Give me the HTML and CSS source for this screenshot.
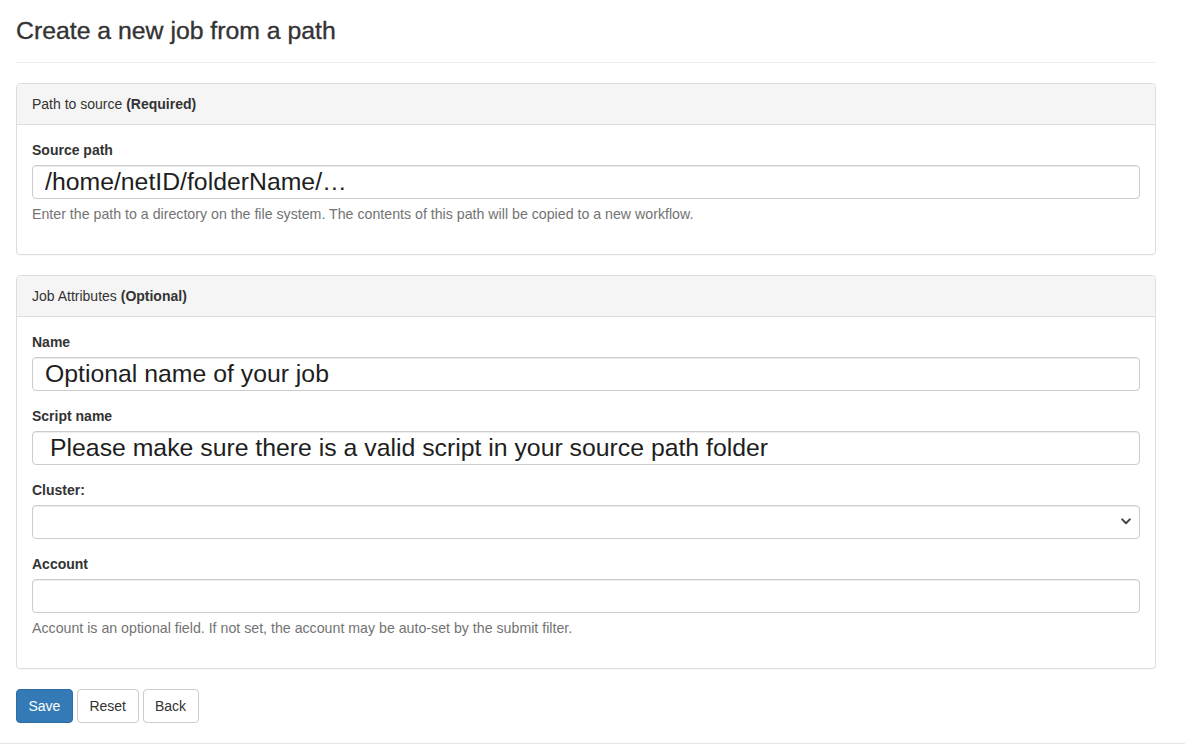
FILE: index.html
```html
<!DOCTYPE html>
<html lang="en">
<head>
<meta charset="utf-8">
<title>Create a new job from a path</title>
<link rel="stylesheet" href="styles.css">
</head>
<body>
<div class="page">
  <div class="container">
    <h1 class="page-header">Create a new job from a path</h1>

    <form class="job-form">
      <div class="panel">
        <div class="panel-heading">Path to source <strong>(Required)</strong></div>
        <div class="panel-body">
          <div class="form-group">
            <label class="control-label" for="source">Source path</label>
            <input class="form-control" id="source" type="text" placeholder="/home/netID/folderName/…">
            <span class="help-block">Enter the path to a directory on the file system. The contents of this path will be copied to a new workflow.</span>
          </div>
        </div>
      </div>

      <div class="panel">
        <div class="panel-heading">Job Attributes <strong>(Optional)</strong></div>
        <div class="panel-body">
          <div class="form-group">
            <label class="control-label" for="name">Name</label>
            <input class="form-control" id="name" type="text" placeholder="Optional name of your job">
          </div>
          <div class="form-group">
            <label class="control-label" for="script">Script name</label>
            <input class="form-control form-control-indent" id="script" type="text" placeholder="Please make sure there is a valid script in your source path folder">
          </div>
          <div class="form-group">
            <label class="control-label" for="cluster">Cluster:</label>
            <div class="select-wrap">
              <select class="form-control form-select" id="cluster">
                <option></option>
              </select>
              <svg class="select-caret" width="10" height="7" viewBox="0 0 10 7" aria-hidden="true">
                <path d="M1.2 1.4 L5 5.2 L8.8 1.4" fill="none" stroke="#444" stroke-width="2" stroke-linecap="round" stroke-linejoin="round"/>
              </svg>
            </div>
          </div>
          <div class="form-group">
            <label class="control-label" for="account">Account</label>
            <input class="form-control" id="account" type="text">
            <span class="help-block">Account is an optional field. If not set, the account may be auto-set by the submit filter.</span>
          </div>
        </div>
      </div>

      <div class="actions">
        <button type="submit" class="btn btn-primary">Save</button>
        <button type="reset" class="btn btn-default">Reset</button>
        <button type="button" class="btn btn-default">Back</button>
      </div>
    </form>
  </div>
  <footer class="footer"></footer>
</div>
</body>
</html>
```

FILE: styles.css
```css
* {
  box-sizing: border-box;
}

html, body {
  margin: 0;
  padding: 0;
  background: #fff;
}

body {
  font-family: "Liberation Sans", Arial, Helvetica, sans-serif;
  font-size: 14px;
  line-height: 20px;
  color: #333;
}

.container {
  width: 1172px;
  padding: 0 16px;
}

.page-header {
  margin: 0 0 20px;
  padding: 17px 0 17px;
  font-size: 24.8px;
  line-height: 28px;
  font-weight: 500;
  color: #333;
  -webkit-text-stroke: 0.35px #333;
  border-bottom: 1px solid #eee;
}

.panel {
  border: 1px solid #ddd;
  border-radius: 4px;
  margin-bottom: 20px;
  background: #fff;
  box-shadow: 0 1px 1px rgba(0, 0, 0, 0.03);
}

.panel-heading {
  padding: 10px 15px;
  background: #f5f5f5;
  border-bottom: 1px solid #ddd;
  border-radius: 3px 3px 0 0;
  font-size: 14px;
  line-height: 20px;
  color: #333;
}

.panel-heading strong {
  font-weight: 700;
}

.panel-body {
  padding: 15px 15px 0;
}

.form-group {
  margin-bottom: 15px;
}

.form-group:last-child {
  padding-bottom: 15px;
}

.control-label {
  display: block;
  margin-bottom: 5px;
  font-weight: 700;
  font-size: 14px;
  line-height: 20px;
  color: #333;
}

.form-control {
  display: block;
  width: 100%;
  height: 34px;
  padding: 0 12px;
  font-family: "Liberation Sans", Arial, Helvetica, sans-serif;
  font-size: 24.8px;
  color: #222;
  background: #fff;
  border: 1px solid #ccc;
  border-radius: 4px;
  box-shadow: inset 0 1px 1px rgba(0, 0, 0, 0.075);
  outline: none;
}

.form-control::placeholder {
  color: #1e1e1e;
  opacity: 1;
}

.form-control-indent {
  padding-left: 17px;
}

.select-wrap {
  position: relative;
}

.form-select {
  appearance: none;
  -webkit-appearance: none;
  font-size: 14px;
  padding-right: 30px;
}

.select-caret {
  position: absolute;
  right: 9px;
  top: 13px;
  pointer-events: none;
}

.help-block {
  display: block;
  margin-top: 5px;
  font-size: 14.2px;
  line-height: 20px;
  color: #737373;
}

.actions {
  display: flex;
  gap: 4px;
  margin-top: 20px;
  margin-bottom: 20px;
}

.btn {
  display: inline-block;
  height: 34px;
  padding: 0 11.5px;
  font-family: "Liberation Sans", Arial, Helvetica, sans-serif;
  font-size: 14px;
  line-height: 32px;
  border: 1px solid transparent;
  border-radius: 4px;
  cursor: pointer;
}

.btn-primary {
  color: #fff;
  background: #337ab7;
  border-color: #2e6da4;
}

.btn-default {
  color: #333;
  background: #fff;
  border-color: #ccc;
}

.footer {
  border-top: 1px solid #e5e5e5;
  height: 13px;
}
```
